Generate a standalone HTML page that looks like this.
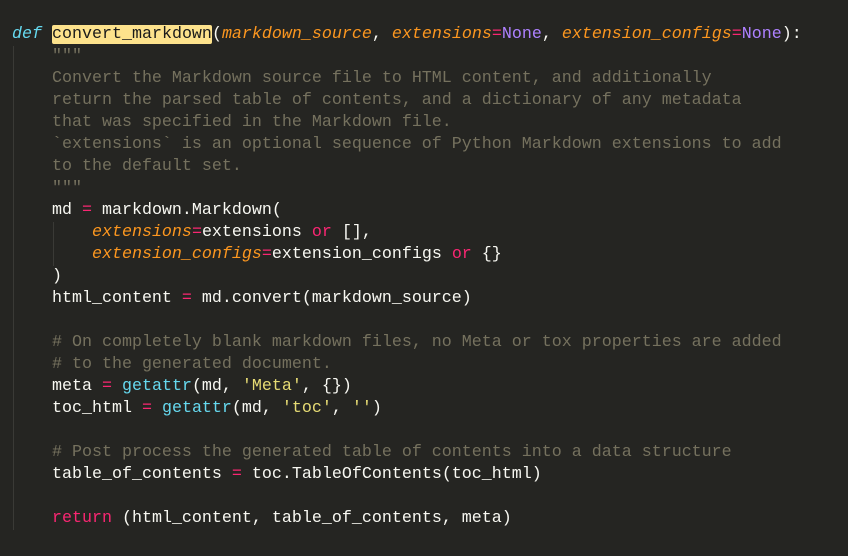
<!DOCTYPE html>
<html><head><meta charset="utf-8"><style>
html,body{margin:0;padding:0;}
body{width:848px;height:556px;background:#252522;overflow:hidden;position:relative;}
pre{margin:0;position:absolute;left:12px;top:24px;font-family:"Liberation Mono",monospace;font-size:16.67px;line-height:22px;color:#f8f8f2;}
.k{color:#66d9ef;font-style:italic}
.f{background:#fde28c;color:#1a1a1a;border-radius:2px}
.p{color:#fd971f;font-style:italic}
.o{color:#f92672}
.n{color:#ae81ff}
.s{color:#e6db74}
.b{color:#66d9ef}
.c{color:#75715e}
.g1{position:absolute;left:13px;top:46px;width:1px;height:484px;background:#3a3a36}
.g2{position:absolute;left:53px;top:222px;width:1px;height:44px;background:#3a3a36}
</style></head><body>
<div class="g1"></div><div class="g2"></div>
<pre><span class="k">def</span> <span class="f">convert_markdown</span>(<span class="p">markdown_source</span>, <span class="p">extensions</span><span class="o">=</span><span class="n">None</span>, <span class="p">extension_configs</span><span class="o">=</span><span class="n">None</span>):
<span class="c">    """</span>
<span class="c">    Convert the Markdown source file to HTML content, and additionally</span>
<span class="c">    return the parsed table of contents, and a dictionary of any metadata</span>
<span class="c">    that was specified in the Markdown file.</span>
<span class="c">    `extensions` is an optional sequence of Python Markdown extensions to add</span>
<span class="c">    to the default set.</span>
<span class="c">    """</span>
    md <span class="o">=</span> markdown.Markdown(
        <span class="p">extensions</span><span class="o">=</span>extensions <span class="o">or</span> [],
        <span class="p">extension_configs</span><span class="o">=</span>extension_configs <span class="o">or</span> {}
    )
    html_content <span class="o">=</span> md.convert(markdown_source)

<span class="c">    # On completely blank markdown files, no Meta or tox properties are added</span>
<span class="c">    # to the generated document.</span>
    meta <span class="o">=</span> <span class="b">getattr</span>(md, <span class="s">'Meta'</span>, {})
    toc_html <span class="o">=</span> <span class="b">getattr</span>(md, <span class="s">'toc'</span>, <span class="s">''</span>)

<span class="c">    # Post process the generated table of contents into a data structure</span>
    table_of_contents <span class="o">=</span> toc.TableOfContents(toc_html)

    <span class="o">return</span> (html_content, table_of_contents, meta)
</pre>
</body></html>
